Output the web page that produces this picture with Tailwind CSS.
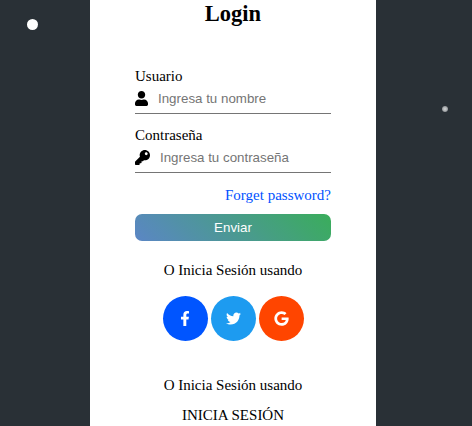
<!DOCTYPE html>
<html lang="es">
<head>
<meta charset="utf-8">
<title>Login</title>
<script src="https://cdn.jsdelivr.net/npm/@tailwindcss/browser@4"></script>
</head>
<body class="relative h-[426px] overflow-hidden bg-[#293036] font-['Liberation_Serif',serif] text-[15px] leading-[17px] text-black">
<span class="absolute left-[27px] top-[19px] size-[11px] rounded-full bg-white"></span>
<span class="absolute left-[442px] top-[106px] size-[6px] rounded-full bg-[radial-gradient(circle,#d4d6d7_0%,#a4a7aa_55%,#4c5257_100%)]"></span>
<main class="ml-[90px] flex h-[426px] w-[286px] flex-col bg-white px-[45px]">
  <h1 class="h-[68px] text-center text-[22.5px] font-bold leading-[27px]">Login</h1>
  <form class="flex flex-col">
    <label for="user">Usuario</label>
    <div class="mb-[13px] flex h-[29px] items-center border-b border-[#757575] pb-px">
      <svg class="h-[15px] w-[13px] shrink-0" viewBox="0 0 448 512"><path d="M224 256c70.7 0 128-57.300 128-128S294.700 0 224 0 96 57.300 96 128s57.300 128 128 128zm89.600 32h-16.700c-22.200 10.200-46.900 16-72.900 16s-50.600-5.800-72.900-16h-16.700C60.200 288 0 348.200 0 422.400V464c0 26.500 21.500 48 48 48h352c26.500 0 48-21.500 48-48v-41.600c0-74.200-60.200-134.400-134.400-134.400z"/></svg>
      <input id="user" class="ml-[10px] w-[165px] font-['Liberation_Sans',sans-serif] text-[13.333px] leading-4 outline-none placeholder:text-[#757575]" placeholder="Ingresa tu nombre">
    </div>
    <label for="pass">Contraseña</label>
    <div class="flex h-[29px] items-center border-b border-[#757575] pb-px">
      <svg class="size-[15px] shrink-0" viewBox="0 0 512 512"><path d="M512 176c0 97.200-78.800 176-176 176-11.200 0-22.200-1.100-32.800-3.100l-24 27A24 24 0 0 1 261.200 384H224v40c0 13.300-10.700 24-24 24h-40v40c0 13.300-10.700 24-24 24H24c-13.300 0-24-10.700-24-24v-78.100c0-6.400 2.500-12.500 7-17l161.800-161.800C162.900 213.800 160 195.300 160 176 160 78.800 238.800 0 336 0S512 78.500 512 176zM336 128c0 26.500 21.500 48 48 48s48-21.500 48-48-21.500-48-48-48-48 21.500-48 48z"/></svg>
      <input id="pass" class="ml-[10px] w-[165px] font-['Liberation_Sans',sans-serif] text-[13.333px] leading-4 outline-none placeholder:text-[#757575]" placeholder="Ingresa tu contraseña">
    </div>
    <a class="mt-[14px] self-end text-[#0052ff]">Forget password?</a>
    <button type="button" class="mt-[10px] h-[27px] rounded-[7px] bg-[linear-gradient(45deg,#5b86c5,#3aad5b)] font-['Liberation_Sans',sans-serif] text-[13.333px] leading-[27px] text-white">Enviar</button>
  </form>
  <p class="mt-[21px] text-center">O Inicia Sesión usando</p>
  <div class="mt-[17px] flex justify-center gap-[3px] text-white">
    <a class="flex size-[45px] items-center justify-center rounded-full bg-[#0055ff]"><svg class="h-[15px] w-[10px]" fill="currentColor" viewBox="0 0 320 512"><path d="M279.140 288l14.220-92.660h-88.910v-60.130c0-25.350 12.420-50.060 52.240-50.060h40.420V6.260S260.430 0 225.360 0c-73.220 0-121.080 44.380-121.080 124.720v70.620H22.890V288h81.390v224h100.170V288z"/></svg></a>
    <a class="flex size-[45px] items-center justify-center rounded-full bg-[#1d9bf0]"><svg class="size-[15px]" fill="currentColor" viewBox="0 0 512 512"><path d="M459.370 151.716c.325 4.548.325 9.097.325 13.645 0 138.720-105.583 298.558-298.558 298.558-59.452 0-114.680-17.219-161.137-47.106 8.447.974 16.568 1.299 25.340 1.299 49.055 0 94.213-16.568 130.274-44.832-46.132-.975-84.792-31.188-98.112-72.772 6.498.974 12.995 1.624 19.818 1.624 9.421 0 18.843-1.300 27.614-3.573-48.081-9.747-84.143-51.980-84.143-102.985v-1.299c13.969 7.797 30.214 12.670 47.431 13.319-28.264-18.843-46.781-51.005-46.781-87.391 0-19.492 5.197-37.360 14.294-52.954 51.655 63.675 129.300 105.258 216.365 109.807-1.624-7.797-2.599-15.918-2.599-24.040 0-57.828 46.782-104.934 104.934-104.934 30.213 0 57.502 12.670 76.670 33.137 23.715-4.548 46.456-13.320 66.599-25.340-7.798 24.366-24.366 44.833-46.132 57.827 21.117-2.273 41.584-8.122 60.426-16.243-14.292 20.791-32.161 39.308-52.628 54.253z"/></svg></a>
    <a class="flex size-[45px] items-center justify-center rounded-full bg-[#ff4500]"><svg class="h-[15px] w-[15px]" fill="currentColor" viewBox="0 0 488 512"><path d="M488 261.800C488 403.300 391.100 504 248 504 110.800 504 0 393.200 0 256S110.800 8 248 8c66.800 0 123 24.500 166.300 64.900l-67.500 64.900C258.500 52.600 94.300 116.600 94.300 256c0 86.500 69.100 156.600 153.700 156.600 98.200 0 135-70.400 140.800-106.900H248v-85.300h236.100c2.300 12.700 3.900 24.900 3.900 41.400z"/></svg></a>
  </div>
  <p class="mt-[36px] text-center">O Inicia Sesión usando</p>
  <p class="mt-[13px] text-center">INICIA SESIÓN</p>
</main>
</body>
</html>
